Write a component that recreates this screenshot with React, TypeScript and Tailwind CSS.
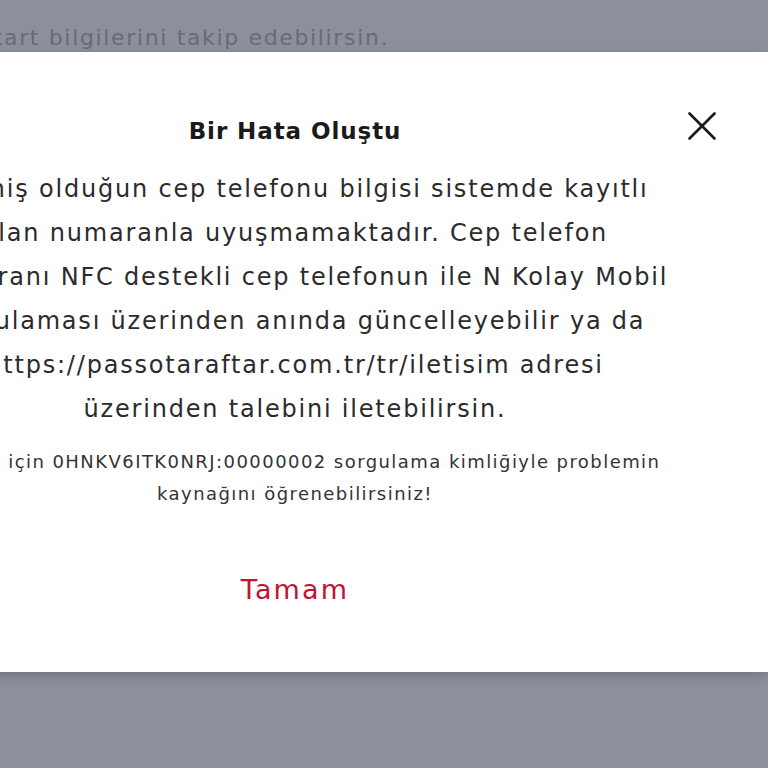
import React from "react";

export default function App() {
  return (
    <div className="relative w-[768px] h-[768px] overflow-hidden bg-[#8b909c]" style={{ fontFamily: '"DejaVu Sans", "Open Sans", sans-serif' }}>
      <div className="absolute left-[-40px] top-[-30px] text-[22px] leading-[30px] tracking-[0.075em] text-[#676b76] whitespace-nowrap">
        <div>Sepetindeki biletleri, kombine ve passolig</div>
        <div className="pl-[30px] mt-[23px]">kart bilgilerini takip edebilirsin.</div>
      </div>
      <div className="absolute left-[-178px] w-[946px] top-[52px] h-[620px] bg-white shadow-[0_4px_10px_rgba(0,0,0,0.18)]">
        <button className="absolute right-[52px] top-[60px] w-[28px] h-[28px] text-[#1a1a1a]">
          <svg viewBox="0 0 28 28" width="28" height="28" fill="none" stroke="currentColor" strokeWidth="2.6" strokeLinecap="round">
            <path d="M1.5 1.5 L26.5 26.5 M26.5 1.5 L1.5 26.5" />
          </svg>
        </button>
        <div className="flex flex-col items-center pt-[63px] whitespace-nowrap text-center">
          <div className="text-[23px] leading-[32px] font-semibold tracking-[0.04em] text-[#1a1a1a]">Bir Hata Oluştu</div>
          <div className="mt-[20px] text-[24px] leading-[44px] tracking-[0.075em] text-[#2b2b2b]">
            Girmiş olduğun cep telefonu bilgisi sistemde kayıtlı<br />
            olan numaranla uyuşmamaktadır. Cep telefon<br />
            numaranı NFC destekli cep telefonun ile N Kolay Mobil<br />
            uygulaması üzerinden anında güncelleyebilir ya da<br />
            https://passotaraftar.com.tr/tr/iletisim adresi<br />
            üzerinden talebini iletebilirsin.
          </div>
          <div className="mt-[15px] text-[18px] leading-[32px] tracking-[0.08em] text-[#333333]">
            Destek için 0HNKV6ITK0NRJ:00000002 sorgulama kimliğiyle problemin<br />
            kaynağını öğrenebilirsiniz!
          </div>
          <button className="mt-[62px] text-[27px] leading-[36px] tracking-[0.08em] text-[#c8102e]">Tamam</button>
        </div>
      </div>
    </div>
  );
}
